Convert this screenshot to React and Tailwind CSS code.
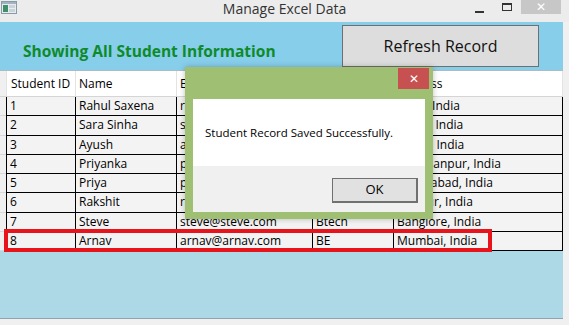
const students = [
  { id: "1", name: "Rahul Saxena", email: "rahul@rahul.com", course: "MCA", address: "Delhi, India" },
  { id: "2", name: "Sara Sinha", email: "sara@sara.com", course: "BCA", address: "Patna, India" },
  { id: "3", name: "Ayush", email: "ayush@ayush.com", course: "Btech", address: "Noida, India" },
  { id: "4", name: "Priyanka", email: "priyanka@priyanka.com", course: "MBA", address: "Chandanpur, India" },
  { id: "5", name: "Priya", email: "priya@priya.com", course: "BBA", address: "Hyderabad, India" },
  { id: "6", name: "Rakshit", email: "rakshit@rakshit.com", course: "MCA", address: "Nagpur, India" },
  { id: "7", name: "Steve", email: "steve@steve.com", course: "Btech", address: "Banglore, India" },
  { id: "8", name: "Arnav", email: "arnav@arnav.com", course: "BE", address: "Mumbai, India" },
];

function AppIcon() {
  return (
    <svg width="16" height="13" viewBox="0 0 16 13">
      <rect x="0.5" y="0.5" width="15" height="12" fill="#e8ecef" stroke="#8a9aa6" />
      <rect x="1" y="1" width="14" height="2" fill="#9fb3c2" />
      <rect x="2" y="4" width="5" height="7" fill="#3f8f6a" />
      <rect x="8" y="4" width="6" height="3" fill="#c9d3da" />
      <rect x="8" y="8" width="6" height="3" fill="#c9d3da" />
    </svg>
  );
}

function TitleBar() {
  return (
    <div className="h-[22px] bg-[#ececec] flex items-start relative">
      <div className="ml-[1px] mt-[1px]">
        <AppIcon />
      </div>
      <div className="absolute left-0 right-0 top-[0px] text-center text-[14px] leading-[18px] text-[#333]">
        Manage Excel Data
      </div>
      <div className="ml-auto flex items-start">
        <div className="w-[9px] h-[2px] bg-[#333] mt-[11px] mr-[18px]" />
        <div className="w-[10px] h-[8px] border border-[#333] border-t-2 mt-[3px] mr-[9px]" />
        <div className="w-[40px] h-[14px] bg-[#c7c7c7] mr-[8px] flex items-center justify-center text-white text-[12px] leading-none">
          ✕
        </div>
      </div>
    </div>
  );
}

function StudentGrid() {
  return (
    <div className="border-t border-[#a9bcc8] bg-[#f0f0f0]">
      <div className="h-[26px] flex bg-white border-b border-[#d5d5d5] text-black">
        <div className="w-[6px] bg-[#f0f0f0]" />
        <div className="w-[69px] border-l border-[#e3e3e3] pl-[4px] flex items-center">Student ID</div>
        <div className="w-[101px] border-l border-[#e3e3e3] pl-[3px] flex items-center">Name</div>
        <div className="w-[136px] border-l border-[#e3e3e3] pl-[3px] flex items-center">Email</div>
        <div className="w-[81px] border-l border-[#e3e3e3] pl-[3px] flex items-center">Course</div>
        <div className="flex-1 border-l border-[#e3e3e3] border-r pl-[3px] flex items-center">Address</div>
      </div>
      {students.map((s) => (
        <div key={s.id} className="h-[19.25px] flex">
          <div className="w-[6px] bg-[#f0f0f0] border-b border-[#d8d8d8]" />
          <div className="flex-1 flex border-b border-black bg-[#f3f3f3]">
            <div className="w-[69px] border-l border-black pl-[3px] flex items-center whitespace-nowrap overflow-hidden">{s.id}</div>
            <div className="w-[101px] border-l border-black pl-[3px] flex items-center whitespace-nowrap overflow-hidden">{s.name}</div>
            <div className="w-[136px] border-l border-black pl-[3px] flex items-center whitespace-nowrap overflow-hidden">{s.email}</div>
            <div className="w-[81px] border-l border-black pl-[3px] flex items-center whitespace-nowrap overflow-hidden">{s.course}</div>
            <div className="flex-1 border-l border-r border-black pl-[3px] flex items-center whitespace-nowrap overflow-hidden">{s.address}</div>
          </div>
        </div>
      ))}
    </div>
  );
}

function SavedDialog() {
  return (
    <div className="absolute left-[185px] top-[67px] w-[248px] h-[152px] bg-[#9fbf73] shadow-[0_0_6px_rgba(0,0,0,0.25)]">
      <div className="absolute left-[213px] top-[1px] w-[31px] h-[21px] bg-[#c75050] flex items-center justify-center text-white text-[12px] leading-none">
        ✕
      </div>
      <div className="absolute left-[8px] top-[32px] w-[232px] h-[113px] flex flex-col">
        <div className="h-[67px] bg-white flex items-center pl-[12px] text-[11.5px] text-black">
          Student Record Saved Successfully.
        </div>
        <div className="flex-1 bg-[#f0f0f0] flex justify-end items-start pt-[12px] pr-[7px]">
          <div className="w-[86px] h-[25px] bg-[#e1e1e1] border border-[#707070] border-r-2 border-b-2 flex items-center justify-center text-[13px] text-black">
            OK
          </div>
        </div>
      </div>
    </div>
  );
}

export default function App() {
  return (
    <div className="w-[569px] h-[325px] bg-[#f0f0f0] relative overflow-hidden text-[12px] font-['Open_Sans',sans-serif] text-black">
      <TitleBar />
      <div className="w-[563px] h-[297px] flex flex-col border-b border-[#8fa3b0]">
        <div className="h-[48px] bg-[#87ceeb] flex items-start">
          <div className="ml-[23px] mt-[19px] text-[15.5px] leading-[20px] font-bold text-[#0f8a2a]">
            Showing All Student Information
          </div>
          <div className="ml-auto mr-[24px] mt-[3px] w-[197px] h-[42px] bg-[#dddddd] border border-[#707070] flex items-center justify-center text-[16px] text-[#111]">
            Refresh Record
          </div>
        </div>
        <StudentGrid />
        <div className="flex-1 bg-[#add8e6]" />
      </div>
      <div className="absolute left-[4px] top-[229px] w-[488px] h-[23px] border-4 border-[#e8141c]" />
      <SavedDialog />
    </div>
  );
}
